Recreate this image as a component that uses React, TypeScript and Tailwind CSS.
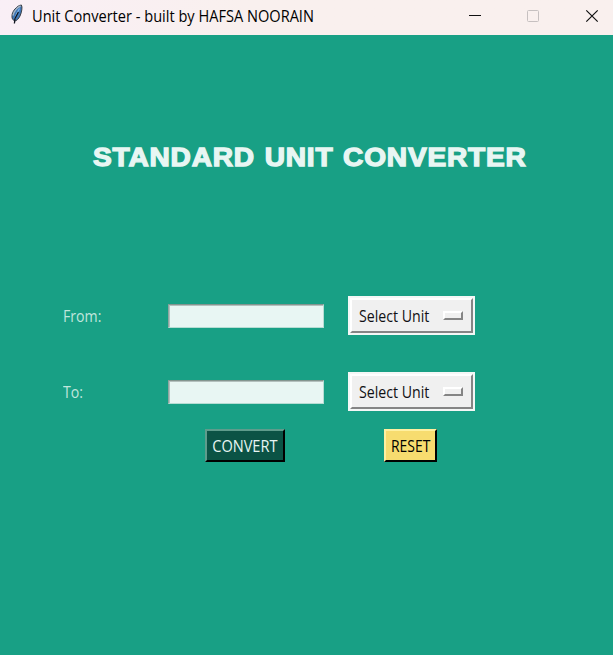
import React from "react";

function Feather() {
  return (
    <svg width="16" height="22" viewBox="0 0 16 22" className="block">
      <path d="M13.4 1 C14.6 3 13.8 8 12 12 C10.6 14.8 8.5 17 6.7 17 L4.6 15.3 C3.1 12 4.3 8 7 5 C9 2.8 11 1.2 13.4 1Z" fill="#3f78b8" stroke="#3b3f46" strokeWidth="1" />
      <path d="M12.6 2 C9.4 3.4 5.8 7.3 5 11.5" fill="none" stroke="#a9b6c4" strokeWidth="1.4" />
      <path d="M11.5 4.5 C9.5 7.5 7.8 11 6.8 15" fill="none" stroke="#7fb6ee" strokeWidth="1.2" />
      <path d="M10.4 8 L7 14.5 L6.4 19.5" fill="none" stroke="#10151e" strokeWidth="1.3" />
    </svg>
  );
}

function TitleBar() {
  return (
    <header className="flex h-[35px] items-start bg-gradient-to-r from-[#f9eff6] to-[#f9f0ee] to-40%">
      <div className="ml-2 mt-[4px] w-6">
        <Feather />
      </div>
      <h1 className="mt-[4px] flex-1 whitespace-nowrap text-[15.5px] leading-6 text-black">
        <span className="inline-block origin-left scale-x-[0.941]">Unit Converter - built by HAFSA NOORAIN</span>
      </h1>
      <div className="flex">
        <svg width="144" height="32" viewBox="0 0 144 32" fill="none">
          <path d="M0 15.5H12" stroke="#111" />
          <rect x="58.5" y="10.5" width="11" height="11" rx="1" stroke="#c6c0c0" />
          <path d="M117.3 10.3L128.7 21.7M128.7 10.3L117.3 21.7" stroke="#111" strokeWidth="1.2" />
        </svg>
      </div>
    </header>
  );
}

function Entry() {
  return (
    <input
      className="block h-6 w-[156px] border border-b-[#b5ddd3] border-l-[#8fa5a0] border-r-[#b5ddd3] border-t-[#83958f] bg-[#e8f6f3] shadow-[inset_1px_1px_0_#b3c0bd] outline-none"
    />
  );
}

function UnitMenu() {
  return (
    <button className="block h-[39px] w-[127px] bg-[#f4f7f6] p-[2px]">
      <span className="flex h-[35px] items-center border-2 border-b-[#858585] border-l-white border-r-[#858585] border-t-white bg-[#f0f0f0] pl-[7px]">
        <span className="w-[84px] whitespace-nowrap text-left text-[16px] leading-5 text-[#101014]">
          <span className="inline-block origin-left scale-x-[0.885]">Select Unit</span>
        </span>
        <span className="-mt-px h-[9px] w-5 border-2 border-b-[#858585] border-l-white border-r-[#858585] border-t-white bg-[#f0f0f0]" />
      </span>
    </button>
  );
}

function Row({ label }: { label: string }) {
  return (
    <div className="flex h-[39px] items-center">
      <label className="w-[105px] whitespace-nowrap text-[16px] leading-5 text-[#c0e6dd]">
        <span className="inline-block origin-left scale-x-[0.885]">{label}</span>
      </label>
      <Entry />
      <div className="ml-6">
        <UnitMenu />
      </div>
    </div>
  );
}

export default function App() {
  return (
    <div className="h-[655px] w-[613px] overflow-hidden bg-[#18a085] font-['Open_Sans','Noto_Sans',sans-serif]">
      <TitleBar />
      <main>
        <h2 className="ml-[93px] mt-[104px] h-9 whitespace-nowrap font-['Liberation_Sans',sans-serif] text-[26px] font-bold leading-9 text-[#e8f6f3]">
          <span className="inline-block origin-left scale-x-[1.08] tracking-[0.75px] [word-spacing:1px] [-webkit-text-stroke:1.3px_#e8f6f3]">STANDARD UNIT CONVERTER</span>
        </h2>
        <div className="ml-[63px] mt-[121px] flex flex-col gap-[37px]">
          <Row label="From:" />
          <Row label="To:" />
        </div>
        <div className="ml-[205px] mt-[18px] flex gap-[99px]">
          <button className="flex h-[33px] w-20 items-center justify-center border-2 border-b-black border-l-[#5f9c8c] border-r-black border-t-[#5f9c8c] bg-[#0b5345] text-[16px] leading-5 text-[#e8f6f3]">
            <span className="inline-block scale-x-[0.91]">CONVERT</span>
          </button>
          <button className="flex h-[33px] w-[53px] items-center justify-center border-2 border-b-black border-l-[#fff0a0] border-r-black border-t-[#fff0a0] bg-[#f7dc6f] text-[16px] leading-5 text-black">
            <span className="inline-block scale-x-[0.87]">RESET</span>
          </button>
        </div>
      </main>
    </div>
  );
}
